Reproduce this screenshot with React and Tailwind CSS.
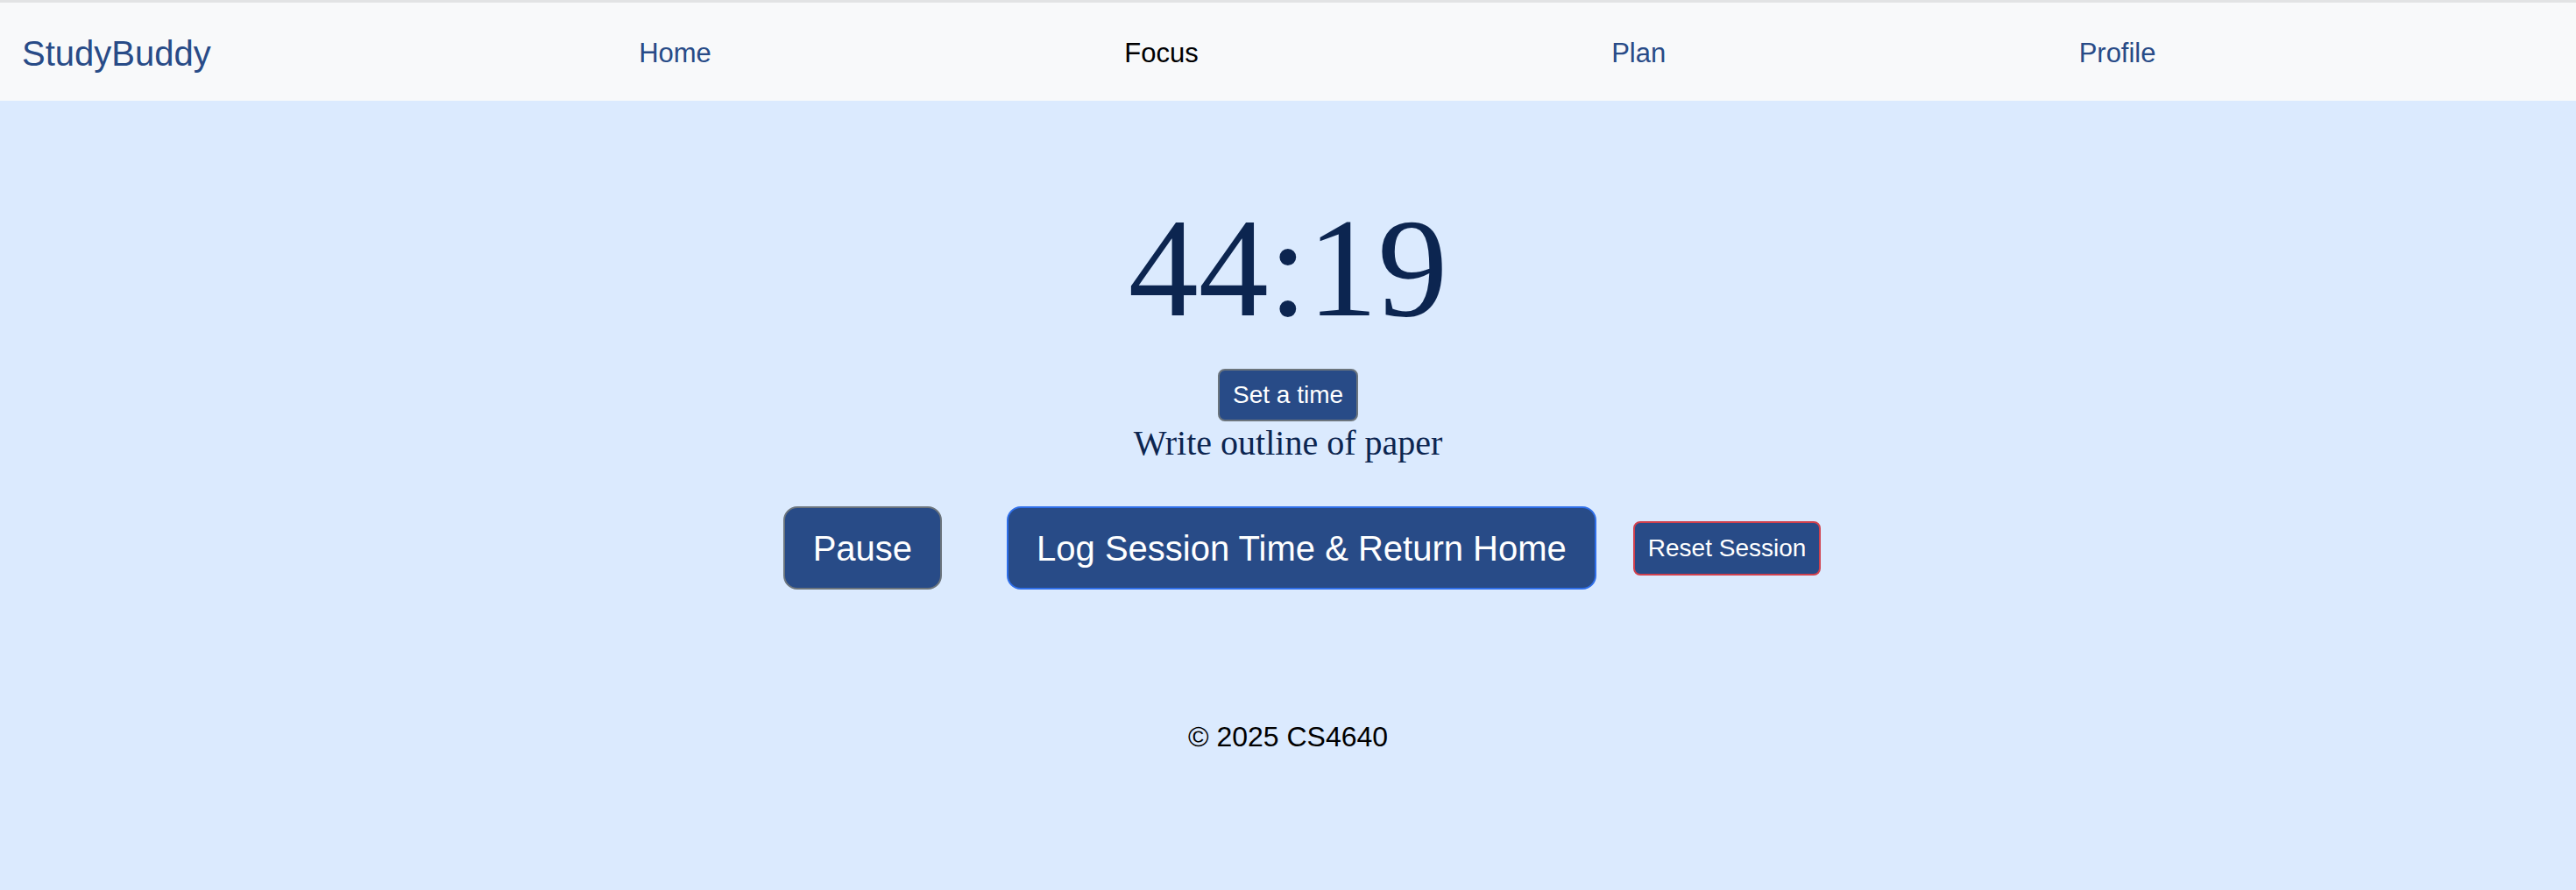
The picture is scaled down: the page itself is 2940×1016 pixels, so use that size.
const links = [
  { label: "Home", active: false },
  { label: "Focus", active: true },
  { label: "Plan", active: false },
  { label: "Profile", active: false },
]

function NavBar() {
  return (
    <nav className="flex h-[115px] items-center border-t-[3px] border-[#e2e3e4] bg-[#f8f9fa] pl-[25px] pr-[8px] pt-[4px]">
      <span className="mr-[17px] text-[40px] leading-none text-[#284b87]">StudyBuddy</span>
      <ul className="flex flex-1 justify-evenly">
        {links.map((l) => (
          <li
            key={l.label}
            className={l.active ? "text-[31px] text-black" : "text-[31px] text-[#284b87]"}
          >
            {l.label}
          </li>
        ))}
      </ul>
    </nav>
  )
}

export default function App() {
  return (
    <div className="min-h-screen bg-[#dbeafe] font-['Liberation_Sans',Arial,sans-serif]">
      <NavBar />

      <main className="flex flex-col items-center pt-[111px]">
        <h1 className="font-['Liberation_Serif','Times_New_Roman',serif] text-[160px] leading-[160px] text-[#0c2550]">
          44:19
        </h1>

        <button className="mt-[35px] h-[60px] rounded-[8px] border-2 border-[#6c757d] bg-[#284b87] px-[15px] text-[28px] text-white">
          Set a time
        </button>
        <p className="mt-[5px] font-['Liberation_Serif','Times_New_Roman',serif] text-[40px] leading-[40px] text-[#0c2550]">
          Write outline of paper
        </p>

        <div className="mt-[52px] flex items-center">
          <button className="ml-[32px] h-[95px] rounded-[16px] border-2 border-[#6c757d] bg-[#284b87] px-[32px] text-[40px] text-white">
            Pause
          </button>
          <button className="ml-[74px] h-[95px] rounded-[16px] border-2 border-[#2f6fea] bg-[#284b87] px-[32px] text-[40px] text-white">
            Log Session Time &amp; Return Home
          </button>
          <button className="ml-[42px] h-[62px] rounded-[8px] border-2 border-[#d0414e] bg-[#284b87] px-[15px] text-[28px] text-white">
            Reset Session
          </button>
        </div>

        <footer className="mt-[144px] text-[32px] text-black">© 2025 CS4640</footer>
      </main>
    </div>
  )
}
